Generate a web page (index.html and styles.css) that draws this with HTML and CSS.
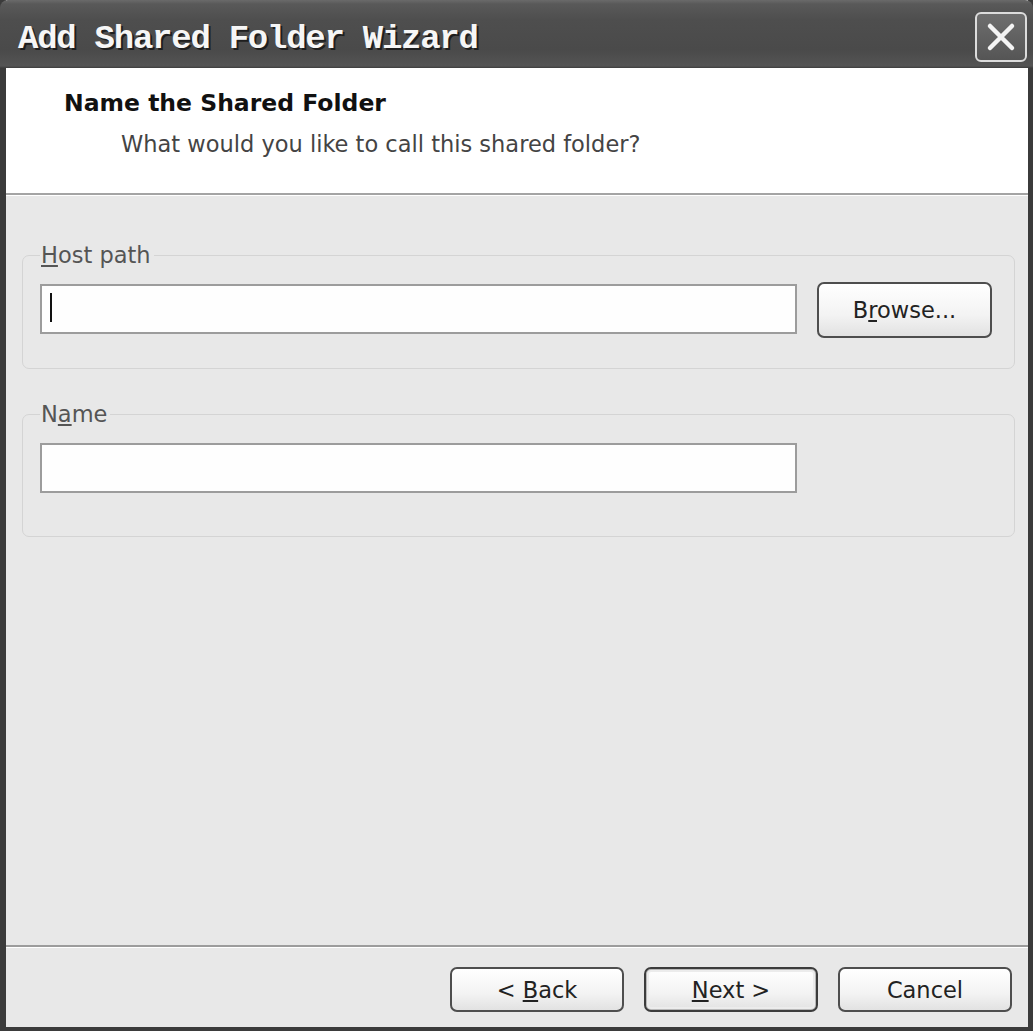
FILE: index.html
```html
<!DOCTYPE html>
<html lang="en">
<head>
    <meta charset="UTF-8">
    <meta name="viewport" content="width=device-width, initial-scale=1.0">
    <title>Add Shared Folder Wizard</title>
    <link rel="stylesheet" href="styles.css">
</head>
<body>
    <div class="wizard">
        <div class="titlebar">
            <span class="titulo">Add Shared Folder Wizard</span>
            <div class="cerrar">
                <svg width="34" height="34" viewBox="0 0 34 34">
                    <path d="M6 6 L28 28 M28 6 L6 28" stroke="#f4f4f4" stroke-width="4.5" stroke-linecap="round"/>
                </svg>
            </div>
        </div>

        <div class="header">
            <p class="header-titulo">Name the Shared Folder</p>
            <p class="header-sub">What would you like to call this shared folder?</p>
        </div>

        <div class="contenido">
            <fieldset class="grupo">
                <legend><u>H</u>ost path</legend>
                <div class="fila">
                    <div class="campo"><span class="cursor"></span></div>
                    <button class="boton boton-browse">B<u>r</u>owse...</button>
                </div>
            </fieldset>

            <fieldset class="grupo grupo-nombre">
                <legend>N<u>a</u>me</legend>
                <div class="fila">
                    <div class="campo"></div>
                </div>
            </fieldset>
        </div>

        <div class="footer">
            <button class="boton">&lt; <u>B</u>ack</button>
            <button class="boton boton-default"><u>N</u>ext &gt;</button>
            <button class="boton">Cancel</button>
        </div>
    </div>
</body>
</html>
```

FILE: styles.css
```css
body {
    margin: 0;
    font-family: "DejaVu Sans", sans-serif;
    background: #e8e8e8;
}
.wizard {
    width: 1033px;
    height: 1031px;
    box-sizing: border-box;
    border-left: 6px solid #3b3b3b;
    border-right: 5px solid #3b3b3b;
    border-bottom: 4px solid #3b3b3b;
    display: flex;
    flex-direction: column;
    background: #e8e8e8;
}
.titlebar {
    height: 68px;
    margin-left: -6px;
    margin-right: -5px;
    padding: 0 6px 0 18px;
    display: flex;
    align-items: center;
    justify-content: space-between;
    background: linear-gradient(#6a6a6a 0, #595959 4px, #4e4e4e 20px, #4a4a4a 50px, #545454 66px, #3c3c3c 68px);
    border-top-left-radius: 8px;
    border-top-right-radius: 8px;
}
.titulo {
    font-family: "Liberation Mono", monospace;
    font-weight: bold;
    font-size: 34px;
    letter-spacing: -1.25px;
    color: #f6f6f6;
    text-shadow: 2px 2px 0 #1e1e1e;
    margin-top: 9px;
}
.cerrar {
    width: 48px;
    height: 46px;
    margin-top: 6px;
    border: 2px solid #dcdcdc;
    border-radius: 6px;
    background: linear-gradient(#6e6e6e, #555555);
    display: flex;
    align-items: center;
    justify-content: center;
}
.header {
    height: 127px;
    background: #ffffff;
    border-bottom: 2px solid #a4a4a4;
    box-shadow: 0 1px 0 #ffffff;
    padding: 20px 0 0 58px;
    box-sizing: border-box;
}
.header p {
    margin: 0;
}
.header-titulo {
    font-weight: bold;
    font-size: 23.5px;
    color: #111;
    line-height: 30px;
}
.header-sub {
    font-size: 22.5px;
    color: #444;
    margin-left: 57px !important;
    margin-top: 11px !important;
    line-height: 30px;
}
.contenido {
    flex: 1;
    padding: 47px 13px 0 16px;
}
.grupo {
    margin: 0;
    border: 1px solid #d4d4d4;
    border-radius: 7px;
    padding: 11px 21px 30px 17px;
}
.grupo legend {
    font-size: 22.5px;
    color: #555;
    padding: 0 3px 0 1px;
    line-height: 26px;
}
.grupo-nombre {
    margin-top: 32px;
    padding-top: 16px;
    padding-bottom: 43px;
}
.fila {
    display: flex;
    align-items: center;
    gap: 20px;
}
.campo {
    width: 757px;
    height: 50px;
    box-sizing: border-box;
    border: 2px solid #9c9c9c;
    background: #fefefe;
    padding: 7px 8px;
}
.cursor {
    display: block;
    width: 2px;
    height: 29px;
    background: #111;
}
.boton {
    width: 174px;
    height: 45px;
    box-sizing: border-box;
    border: 2px solid #4e4e4e;
    border-radius: 7px;
    background: linear-gradient(#ffffff, #f3f3f3 60%, #e2e2e2);
    font-family: "DejaVu Sans", sans-serif;
    font-size: 22.5px;
    color: #222;
    padding: 0;
}
.boton-browse {
    width: 175px;
    height: 56px;
    margin-top: 3px;
}
.boton-default {
    box-shadow: inset 0 0 0 1px #b8b8b8, inset 0 0 0 3px #ececec;
    border-color: #3c3c3c;
}
.footer {
    height: 82px;
    box-sizing: border-box;
    border-top: 2px solid #9c9c9c;
    box-shadow: inset 0 1px 0 #ffffff;
    display: flex;
    justify-content: flex-end;
    align-items: flex-start;
    gap: 20px;
    padding: 20px 16px 0 0;
}
```
